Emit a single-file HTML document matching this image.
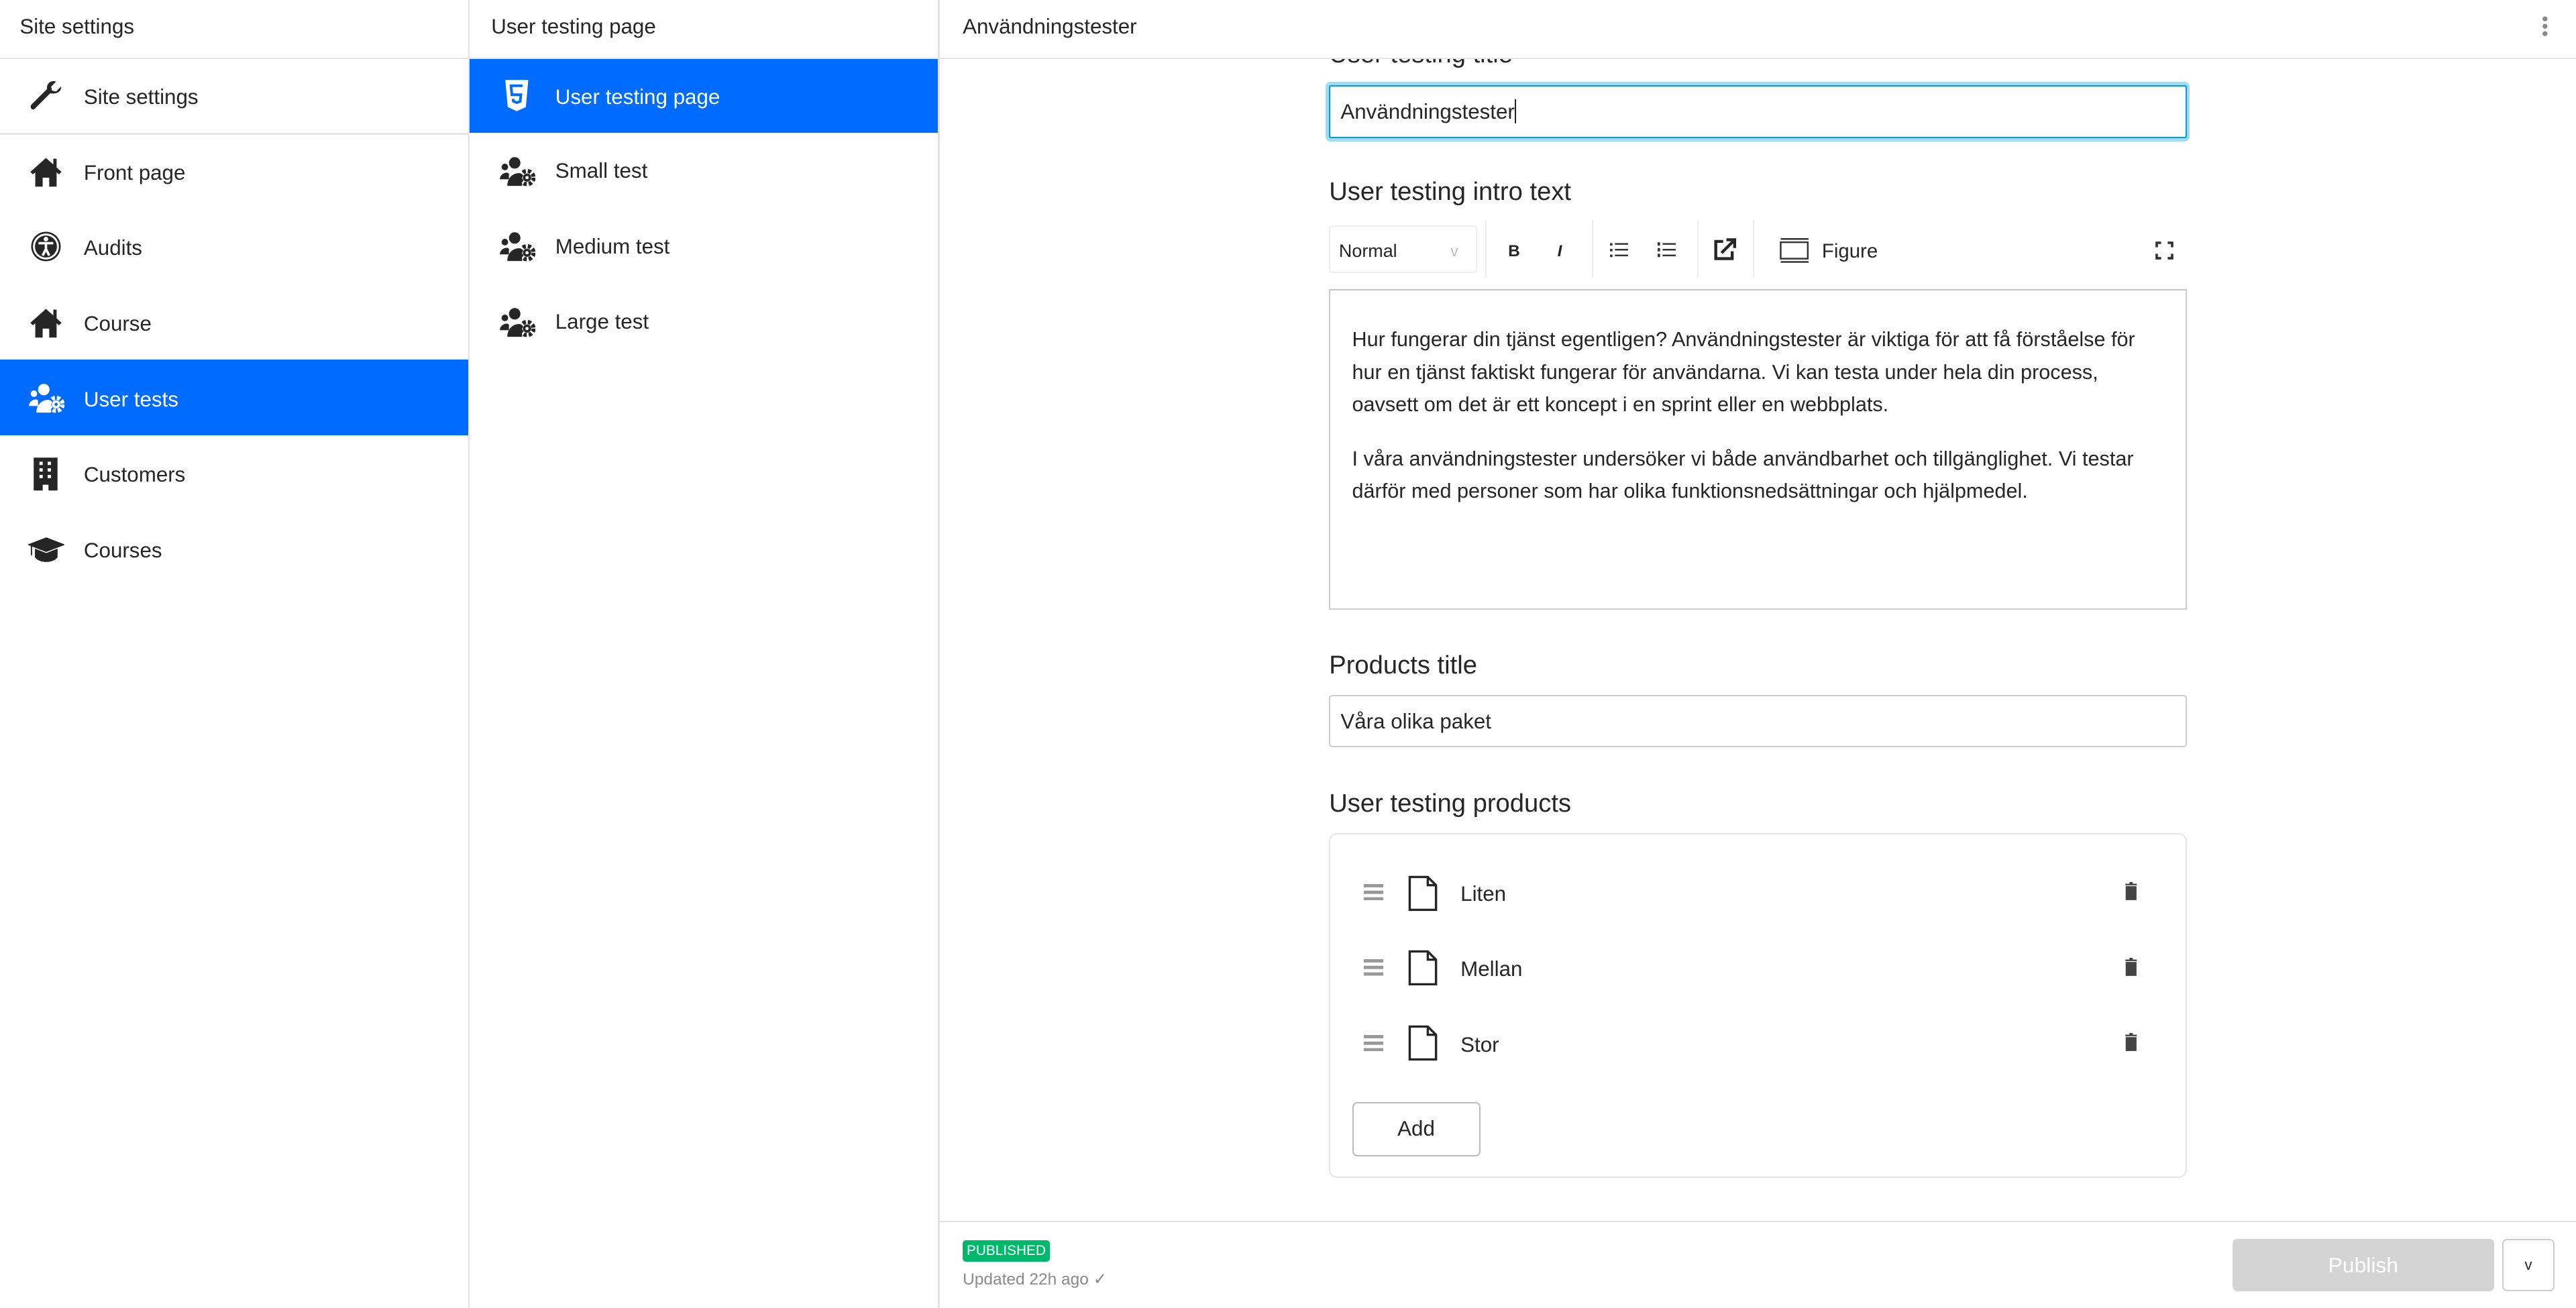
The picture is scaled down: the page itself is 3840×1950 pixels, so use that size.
<!DOCTYPE html>
<html><head><meta charset="utf-8">
<style>
html,body{margin:0;padding:0;background:#fff;width:3840px;height:1950px;overflow:hidden}
#r{zoom:2.44898;position:relative;width:1568px;height:797px;font-family:"Liberation Sans",Arial,sans-serif;color:#262626;font-size:12.8px}
.a{position:absolute}
.vl{position:absolute;top:0;bottom:0;width:1px;background:#e2e2e2}
.hl{position:absolute;height:1px;background:#e6e6e6}
.t{position:absolute;line-height:16px;white-space:nowrap}
.sel{position:absolute;background:#006bff}
.ic{position:absolute}
.lbl{position:absolute;font-size:15.6px;left:809px;white-space:nowrap}
.inp{position:absolute;left:809px;width:522px;height:31px;border:1px solid #ccc;border-radius:2px;box-sizing:border-box}
</style></head><body><div id="r">
<div class="vl" style="left:285px"></div>
<div class="vl" style="left:571px"></div>
<div class="hl" style="left:0;width:1568px;top:35px"></div>
<div class="hl" style="left:0;width:285px;top:81px"></div>
<div class="t" style="left:12px;top:8px">Site settings</div>
<div class="t" style="left:299px;top:8px">User testing page</div>
<div class="t" style="left:586px;top:8px">Användningstester</div>
<svg class="ic" style="left:1545px;top:9px" width="8" height="16"><circle cx="4" cy="2.5" r="1.5" fill="#888"/><circle cx="4" cy="7" r="1.5" fill="#888"/><circle cx="4" cy="11.5" r="1.5" fill="#888"/></svg>

<div class="sel" style="left:0;top:219px;width:285px;height:46px"></div>
<svg class="ic" style="left:17px;top:48px" width="22" height="22" viewBox="0 0 22 22"><path d="M20 4.5 L17 7.5 L14.5 7 L14 4.5 L17 1.5 C14 0.5 11 2.5 11.5 6 L2 15.5 C0.5 17 2.5 19.5 4 18 L13.5 8.5 C17 9.5 20.5 7.5 20 4.5Z" fill="#262626"/></svg>
<div class="t" style="left:51px;top:51px">Site settings</div>
<svg class="ic" style="left:18px;top:95px" width="20" height="19" viewBox="0 0 20 19"><path d="M10 1 L0.5 9.5 L2 11 L3.5 9.8 V18.5 H8 V13 H12 V18.5 H16.5 V9.8 L18 11 L19.5 9.5 L16.5 6.8 V1.5 H14.5 V5 Z" fill="#262626"/></svg>
<div class="t" style="left:51px;top:97px">Front page</div>
<svg class="ic" style="left:18px;top:140px" width="20" height="20" viewBox="0 0 20 20"><circle cx="10" cy="10" r="9" fill="#262626"/><circle cx="10" cy="10" r="7.3" fill="none" stroke="#fff" stroke-width="1.2"/><circle cx="10" cy="5.5" r="1.4" fill="#fff"/><path d="M5.5 8 H14.5 M10 8 V11.5 M10 11.5 L8 15.5 M10 11.5 L12 15.5" stroke="#fff" stroke-width="1.5" fill="none"/></svg>
<div class="t" style="left:51px;top:143px">Audits</div>
<svg class="ic" style="left:18px;top:187px" width="20" height="19" viewBox="0 0 20 19"><path d="M10 1 L0.5 9.5 L2 11 L3.5 9.8 V18.5 H8 V13 H12 V18.5 H16.5 V9.8 L18 11 L19.5 9.5 L16.5 6.8 V1.5 H14.5 V5 Z" fill="#262626"/></svg>
<div class="t" style="left:51px;top:189px">Course</div>
<svg class="ic" style="left:17px;top:233px" width="22" height="19" viewBox="0 0 22 19"><circle cx="3.5" cy="6.5" r="2" fill="#fff"/><circle cx="9.5" cy="4" r="3.5" fill="#fff"/><path d="M0.5 14 C0.5 10 6 9 6 11 V14 Z M5 18 C5 11 12 9 14 11 V18 Z" fill="#fff"/><circle cx="17" cy="13" r="4" fill="none" stroke="#fff" stroke-width="2.5" stroke-dasharray="2 1.2"/><circle cx="17" cy="13" r="2.5" fill="#fff"/><circle cx="17" cy="13" r="1" fill="#006bff"/></svg>
<div class="t" style="left:51px;top:235px;color:#fff">User tests</div>
<svg class="ic" style="left:20px;top:278px" width="16" height="21" viewBox="0 0 16 21"><path d="M0.5 0.5 H15 V20.5 H9.5 V17 H6 V20.5 H0.5Z" fill="#262626"/><g fill="#fff"><rect x="4" y="3" width="2" height="2"/><rect x="9" y="3" width="2" height="2"/><rect x="4" y="7" width="2" height="2"/><rect x="9" y="7" width="2" height="2"/><rect x="4" y="11" width="2" height="2"/><rect x="9" y="11" width="2" height="2"/></g></svg>
<div class="t" style="left:51px;top:281px">Customers</div>
<svg class="ic" style="left:17px;top:327px" width="22" height="16" viewBox="0 0 22 16"><path d="M11 0.5 L21.5 4.5 L11 8.5 L0.5 4.5Z M4.5 7.5 V12 C7 15.5 15 15.5 17.5 12 V7.5 L11 10 Z M2 5 V11" fill="#262626" stroke="#262626" stroke-width="0.8"/></svg>
<div class="t" style="left:51px;top:327px">Courses</div>

<div class="sel" style="left:286px;top:36px;width:285px;height:45px"></div>
<svg class="ic" style="left:307px;top:48px" width="15" height="20" viewBox="0 0 15 20"><path d="M0.5 0.5 H14.5 L13 17 L7.5 19.5 L2 17Z" fill="#fff"/><path d="M11 4 H4 L4.5 9.5 H10 L9.6 13.5 L7.5 14.3 L5.4 13.5 L5.3 12" fill="none" stroke="#006bff" stroke-width="1.6"/></svg>
<div class="t" style="left:338px;top:51px;color:#fff">User testing page</div>
<svg class="ic" style="left:304px;top:95px" width="22" height="19" viewBox="0 0 22 19"><circle cx="3.5" cy="6.5" r="2" fill="#262626"/><circle cx="9.5" cy="4" r="3.5" fill="#262626"/><path d="M0.5 14 C0.5 10 6 9 6 11 V14 Z M5 18 C5 11 12 9 14 11 V18 Z" fill="#262626"/><circle cx="17" cy="13" r="4" fill="none" stroke="#262626" stroke-width="2.5" stroke-dasharray="2 1.2"/><circle cx="17" cy="13" r="2.5" fill="#262626"/><circle cx="17" cy="13" r="1" fill="#fff"/></svg>
<div class="t" style="left:338px;top:96px">Small test</div>
<svg class="ic" style="left:304px;top:141px" width="22" height="19" viewBox="0 0 22 19"><circle cx="3.5" cy="6.5" r="2" fill="#262626"/><circle cx="9.5" cy="4" r="3.5" fill="#262626"/><path d="M0.5 14 C0.5 10 6 9 6 11 V14 Z M5 18 C5 11 12 9 14 11 V18 Z" fill="#262626"/><circle cx="17" cy="13" r="4" fill="none" stroke="#262626" stroke-width="2.5" stroke-dasharray="2 1.2"/><circle cx="17" cy="13" r="2.5" fill="#262626"/><circle cx="17" cy="13" r="1" fill="#fff"/></svg>
<div class="t" style="left:338px;top:142px">Medium test</div>
<svg class="ic" style="left:304px;top:187px" width="22" height="19" viewBox="0 0 22 19"><circle cx="3.5" cy="6.5" r="2" fill="#262626"/><circle cx="9.5" cy="4" r="3.5" fill="#262626"/><path d="M0.5 14 C0.5 10 6 9 6 11 V14 Z M5 18 C5 11 12 9 14 11 V18 Z" fill="#262626"/><circle cx="17" cy="13" r="4" fill="none" stroke="#262626" stroke-width="2.5" stroke-dasharray="2 1.2"/><circle cx="17" cy="13" r="2.5" fill="#262626"/><circle cx="17" cy="13" r="1" fill="#fff"/></svg>
<div class="t" style="left:338px;top:188px">Large test</div>

<div style="position:absolute;left:572px;top:36px;width:996px;height:707px;overflow:hidden">
  <div class="lbl" style="left:237px;top:-12px">User testing title</div>
</div>
<div class="a" style="left:807px;top:50px;width:526px;height:36px;border-radius:3px;background:#9fdcf3"></div>
<div class="a" style="left:809px;top:52px;width:522px;height:32px;border:1px solid #0a9bd6;box-sizing:border-box;background:#fff;border-radius:1px"></div>
<div class="t" style="left:816px;top:60px">Användningstester<span style="display:inline-block;width:1px;height:15px;background:#222;vertical-align:-3px"></span></div>

<div class="lbl" style="top:108px">User testing intro text</div>
<div class="a" style="left:809px;top:137px;width:90px;height:29px;border:1px solid #eee;box-sizing:border-box;border-radius:2px"></div>
<div class="t" style="left:815px;top:145px;font-size:11px">Normal</div>
<div class="t" style="left:883px;top:145px;font-size:9px;color:#bbb">v</div>
<div class="a" style="left:904px;top:134px;width:1px;height:35px;background:#eee"></div>
<div class="a" style="left:969px;top:134px;width:1px;height:35px;background:#eee"></div>
<div class="a" style="left:1033px;top:134px;width:1px;height:35px;background:#eee"></div>
<div class="a" style="left:1067px;top:134px;width:1px;height:35px;background:#eee"></div>
<div class="t" style="left:918px;top:145px;font-size:10px;font-weight:bold">B</div>
<div class="t" style="left:948px;top:145px;font-size:10px;font-weight:bold;font-style:italic">I</div>
<svg class="ic" style="left:980px;top:147px" width="12" height="10"><g fill="#333"><rect x="0" y="1" width="1.5" height="1.5"/><rect x="0" y="4.5" width="1.5" height="1.5"/><rect x="0" y="8" width="1.5" height="1.5"/><rect x="3" y="1" width="8" height="1"/><rect x="3" y="4.5" width="8" height="1"/><rect x="3" y="8" width="8" height="1"/></g></svg>
<svg class="ic" style="left:1009px;top:147px" width="12" height="10"><g fill="#333"><rect x="0" y="0.5" width="1.5" height="2"/><rect x="0" y="4" width="1.5" height="2"/><rect x="0" y="7.5" width="1.5" height="2"/><rect x="3" y="1" width="8" height="1"/><rect x="3" y="4.5" width="8" height="1"/><rect x="3" y="8" width="8" height="1"/></g></svg>
<svg class="ic" style="left:1043px;top:145px" width="14" height="14" viewBox="0 0 14 14"><path d="M6 2 H1.5 V12.5 H11.5 V8" fill="none" stroke="#262626" stroke-width="1.8"/><path d="M5 9 L12 2 M8 1 H13 V6" fill="none" stroke="#262626" stroke-width="1.8"/></svg>
<svg class="ic" style="left:1083px;top:145px" width="19" height="15" viewBox="0 0 19 15"><path d="M1 0.5 H18 M1 14.5 H18" stroke="#333" stroke-width="1"/><rect x="1" y="2.5" width="16.5" height="10" fill="none" stroke="#333" stroke-width="1"/></svg>
<div class="t" style="left:1109px;top:145px;font-size:12px">Figure</div>
<svg class="ic" style="left:1312px;top:147px" width="11" height="11" viewBox="0 0 11 11"><path d="M0.8 3.5 V0.8 H3.5 M7.5 0.8 H10.2 V3.5 M10.2 7.5 V10.2 H7.5 M3.5 10.2 H0.8 V7.5" fill="none" stroke="#333" stroke-width="1.5"/></svg>

<div class="a" style="left:809px;top:176px;width:522px;height:195px;border:1px solid #ccc;border-top-color:#c4c4c4;box-sizing:border-box"></div>
<div class="a" style="left:823px;top:197px;width:495px;line-height:19.7px;font-size:12.5px">
<div>Hur fungerar din tjänst egentligen? Användningstester är viktiga för att få förståelse för hur en tjänst faktiskt fungerar för användarna. Vi kan testa under hela din process, oavsett om det är ett koncept i en sprint eller en webbplats.</div>
<div style="margin-top:13.5px">I våra användningstester undersöker vi både användbarhet och tillgänglighet. Vi testar därför med personer som har olika funktionsnedsättningar och hjälpmedel.</div>
</div>

<div class="lbl" style="top:396px">Products title</div>
<div class="inp" style="top:423px;height:32px"></div>
<div class="t" style="left:816px;top:431px">Våra olika paket</div>

<div class="lbl" style="top:480px">User testing products</div>
<div class="a" style="left:809px;top:507px;width:522px;height:210px;border:1px solid #e6e6e6;box-sizing:border-box;border-radius:5px"></div>

<svg class="ic" style="left:830px;top:538px" width="12" height="10"><g fill="#999"><rect y="0" width="12" height="2"/><rect y="4" width="12" height="2"/><rect y="8" width="12" height="2"/></g></svg>
<svg class="ic" style="left:857px;top:533px" width="18" height="22" viewBox="0 0 18 22"><path d="M1 1 H12 L17 6 V21 H1Z M12 1 V6 H17" fill="none" stroke="#262626" stroke-width="1.4"/></svg>
<div class="t" style="left:889px;top:536px">Liten</div>
<svg class="ic" style="left:1293px;top:537px" width="8" height="11" viewBox="0 0 8 11"><path d="M0.5 1.5 H7.5 M3 0.5 H5 M1.2 3 H6.8 V10.5 H1.2Z" fill="#444" stroke="#444"/></svg>

<svg class="ic" style="left:830px;top:584px" width="12" height="10"><g fill="#999"><rect y="0" width="12" height="2"/><rect y="4" width="12" height="2"/><rect y="8" width="12" height="2"/></g></svg>
<svg class="ic" style="left:857px;top:578px" width="18" height="22" viewBox="0 0 18 22"><path d="M1 1 H12 L17 6 V21 H1Z M12 1 V6 H17" fill="none" stroke="#262626" stroke-width="1.4"/></svg>
<div class="t" style="left:889px;top:582px">Mellan</div>
<svg class="ic" style="left:1293px;top:583px" width="8" height="11" viewBox="0 0 8 11"><path d="M0.5 1.5 H7.5 M3 0.5 H5 M1.2 3 H6.8 V10.5 H1.2Z" fill="#444" stroke="#444"/></svg>

<svg class="ic" style="left:830px;top:630px" width="12" height="10"><g fill="#999"><rect y="0" width="12" height="2"/><rect y="4" width="12" height="2"/><rect y="8" width="12" height="2"/></g></svg>
<svg class="ic" style="left:857px;top:624px" width="18" height="22" viewBox="0 0 18 22"><path d="M1 1 H12 L17 6 V21 H1Z M12 1 V6 H17" fill="none" stroke="#262626" stroke-width="1.4"/></svg>
<div class="t" style="left:889px;top:628px">Stor</div>
<svg class="ic" style="left:1293px;top:629px" width="8" height="11" viewBox="0 0 8 11"><path d="M0.5 1.5 H7.5 M3 0.5 H5 M1.2 3 H6.8 V10.5 H1.2Z" fill="#444" stroke="#444"/></svg>

<div class="a" style="left:823px;top:671px;width:78px;height:33px;border:1px solid #bbb;box-sizing:border-box;border-radius:3px;text-align:center;line-height:31px">Add</div>

<div class="hl" style="left:572px;width:996px;top:743px;background:#e2e2e2"></div>
<div class="a" style="left:586px;top:755px;width:53px;height:13px;background:#00b86b;border-radius:2px;color:#fff;font-size:8.5px;line-height:13px;text-align:center">PUBLISHED</div>
<div class="t" style="left:586px;top:771px;font-size:10px;color:#8a8a8a">Updated 22h ago ✓</div>
<div class="a" style="left:1359px;top:754px;width:159px;height:32px;background:#d4d4d4;border-radius:3px;color:#fff;text-align:center;line-height:32px;font-size:13px">Publish</div>
<div class="a" style="left:1523px;top:754px;width:32px;height:32px;border:1px solid #ccc;box-sizing:border-box;border-radius:3px;text-align:center;line-height:30px;font-size:9px">v</div>
</div></body></html>
